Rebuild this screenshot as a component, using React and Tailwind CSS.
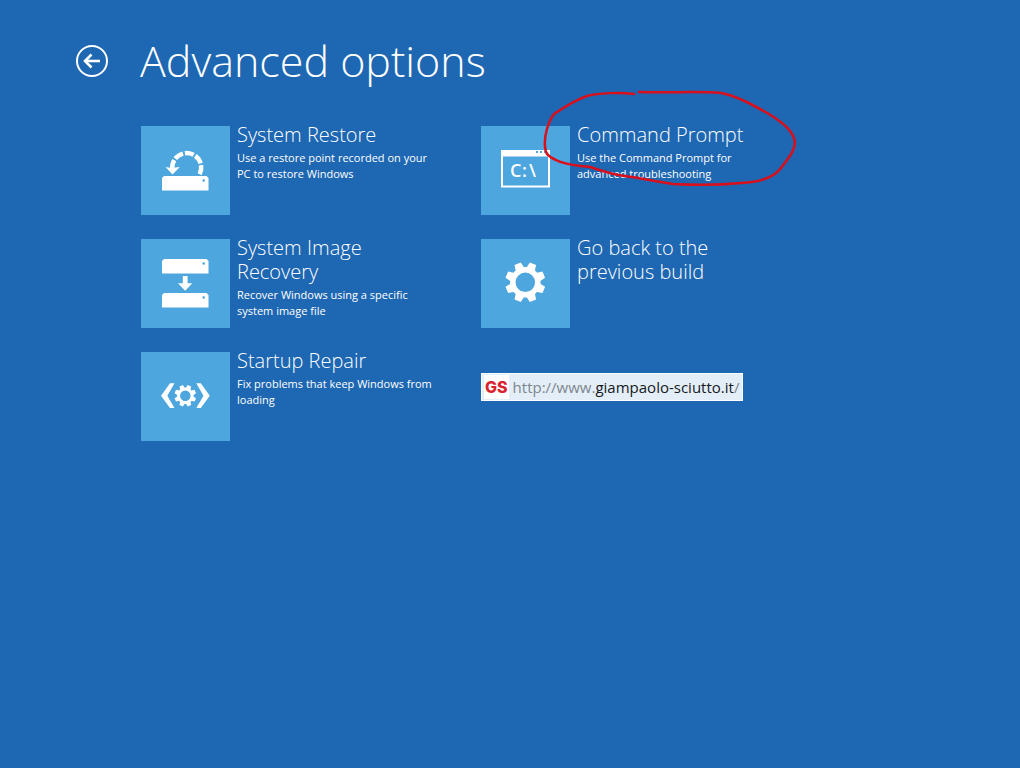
import { useState } from 'react';

const TEETH = [22.5, 67.5, 112.5, 157.5, 202.5, 247.5, 292.5, 337.5];

// Eight-toothed gear centred on 0,0
function Gear() {
  return (
    <g fill="currentColor">
      <circle r="12.5" fill="none" stroke="currentColor" strokeWidth="5.5" />
      {TEETH.map((angle) => (
        <path key={angle} d="M-4.6 -13.5 L-3.4 -20 H3.4 L4.6 -13.5 Z" transform={`rotate(${angle})`} />
      ))}
    </g>
  );
}

function Drive({ y }) {
  return (
    <g>
      <path d={`M23 ${y} H65.5 L67.5 ${y + 2} V${y + 14.5} H21 V${y + 2} Z`} fill="currentColor" />
      <circle cx="62.7" cy={y + 4.5} r="1.3" fill="#4ea6de" />
    </g>
  );
}

function RestoreIcon() {
  return (
    <g>
      <path
        d="M31.3 43 A14.5 14.5 0 1 1 58.5 48.5"
        fill="none"
        stroke="currentColor"
        strokeWidth="4.5"
        strokeDasharray="9.2 1.8"
      />
      <path d="M24.5 41 L30 42 L38.8 41 L31.5 48.5 Z" fill="currentColor" />
      <Drive y={50} />
    </g>
  );
}

function ImageRecoveryIcon() {
  return (
    <g>
      <Drive y={20} />
      <path d="M41.8 37 H46.6 V44.2 H51.3 L44.2 51.8 L37 44.2 H41.8 Z" fill="currentColor" />
      <Drive y={54} />
    </g>
  );
}

function StartupRepairIcon() {
  return (
    <g>
      <path d="M29 31.3 H33.5 L26.3 43.7 L33.5 56 H29 L20 43.7 Z" fill="currentColor" />
      <path d="M59.8 31.3 H55.3 L62.5 43.7 L55.3 56 H59.8 L68.8 43.7 Z" fill="currentColor" />
      <g transform="translate(44.3 43.7) scale(0.54)">
        <Gear />
      </g>
    </g>
  );
}

function PromptIcon() {
  return (
    <g>
      <rect x="21" y="25" width="47" height="35.5" fill="none" stroke="currentColor" strokeWidth="2" />
      <rect x="20" y="24" width="49" height="6.5" fill="currentColor" />
      <g fill="#4ea6de">
        <rect x="55" y="25" width="2" height="2" />
        <rect x="59" y="25" width="2" height="2" />
        <rect x="63" y="25" width="2" height="2" />
      </g>
      <g fill="currentColor" fontSize="18" fontWeight="600">
        <text x="29" y="51">C</text>
        <text x="41" y="51">:</text>
        <text x="48" y="51">\</text>
      </g>
    </g>
  );
}

function GearIcon() {
  return (
    <g transform="translate(44.3 43.3)">
      <Gear />
    </g>
  );
}

const OPTIONS = [
  {
    title: 'System Restore',
    description: 'Use a restore point recorded on your PC to restore Windows',
    Icon: RestoreIcon,
  },
  {
    title: 'Command Prompt',
    description: 'Use the Command Prompt for advanced troubleshooting',
    Icon: PromptIcon,
    circled: true,
  },
  {
    title: 'System Image Recovery',
    description: 'Recover Windows using a specific system image file',
    Icon: ImageRecoveryIcon,
  },
  {
    title: 'Go back to the previous build',
    Icon: GearIcon,
  },
  {
    title: 'Startup Repair',
    description: 'Fix problems that keep Windows from loading',
    Icon: StartupRepairIcon,
  },
];

// Red pen stroke drawn over the option
function PenCircle() {
  return (
    <svg
      className="pointer-events-none absolute -top-[35px] left-15 h-25 w-[260px]"
      viewBox="0 0 260 100"
      fill="none"
      stroke="#d90f1c"
      strokeWidth="2.5"
      strokeLinecap="round"
      strokeLinejoin="round"
      aria-hidden="true"
    >
      <path d="M93 6 C78 4 58 5 46 8 C34 12 22 20 13 26 C7 34 3 48 4 58 C4 66 8 69 15 72 C24 77 34 77 49 79 C62 83 72 87 84 88 C100 90 112 93 132 96 C150 97 180 97 200 95 C222 94 234 88 240 80 C248 69 253 64 254 55 C253 44 244 36 228 26 C212 17 196 8 180 5 C160 3 130 5 98 4" />
    </svg>
  );
}

function OptionButton({ option, selected, onSelect }) {
  const { title, description, Icon, circled } = option;

  return (
    <div className="relative">
      <button
        type="button"
        aria-pressed={selected}
        onClick={onSelect}
        className="flex w-full max-w-[297px] cursor-pointer items-start gap-[7px] text-left"
      >
        <span className="mt-[3px] size-[89px] shrink-0 bg-[#4ea6de]">
          <svg viewBox="0 0 89 89" className="size-full" aria-hidden="true">
            <Icon />
          </svg>
        </span>
        <span className="flex flex-col gap-[3px]">
          <span className="max-w-[180px] text-[20px] leading-6 font-light">{title}</span>
          {description && <span className="text-[11px] leading-4">{description}</span>}
        </span>
      </button>
      {circled && <PenCircle />}
    </div>
  );
}

export default function App() {
  const [selected, setSelected] = useState(null);

  return (
    <main className="min-h-screen bg-[#1e67b2] px-19 pt-8 font-['Open_Sans','Noto_Sans',sans-serif] text-white">
      <header className="flex items-center gap-8">
        <button type="button" aria-label="Back" className="size-8 shrink-0 cursor-pointer">
          <svg viewBox="0 0 32 32" className="size-full" fill="none" stroke="currentColor" aria-hidden="true">
            <circle cx="16" cy="16" r="15" strokeWidth="2" />
            <path d="M24 16 H9" strokeWidth="2.6" />
            <path d="M15.5 9.5 L9 16 L15.5 22.5" strokeWidth="2.6" />
          </svg>
        </button>
        <h1 className="text-[43px] leading-[58px] font-light">Advanced options</h1>
      </header>

      <div className="mt-[33px] grid max-w-[745px] grid-cols-2 gap-y-[21px] pl-[65px]">
        {OPTIONS.map((option) => (
          <OptionButton
            key={option.title}
            option={option}
            selected={selected === option.title}
            onSelect={() => setSelected(option.title)}
          />
        ))}
        <div className="pt-6">
          <a
            href="http://www.giampaolo-sciutto.it/"
            className="inline-flex h-7 items-center gap-1 border border-white bg-[#e4eef8] pr-[3px] pl-[2px] whitespace-nowrap"
          >
            <span className="bg-white px-px font-['Inter',sans-serif] text-[16px] leading-6 font-extrabold text-[#d9232e]">GS</span>
            <span className="text-[15px] leading-6 text-[#7d868e]">
              http://www.<span className="text-[#15191d]">giampaolo-sciutto.it</span>/
            </span>
          </a>
        </div>
      </div>
    </main>
  );
}
